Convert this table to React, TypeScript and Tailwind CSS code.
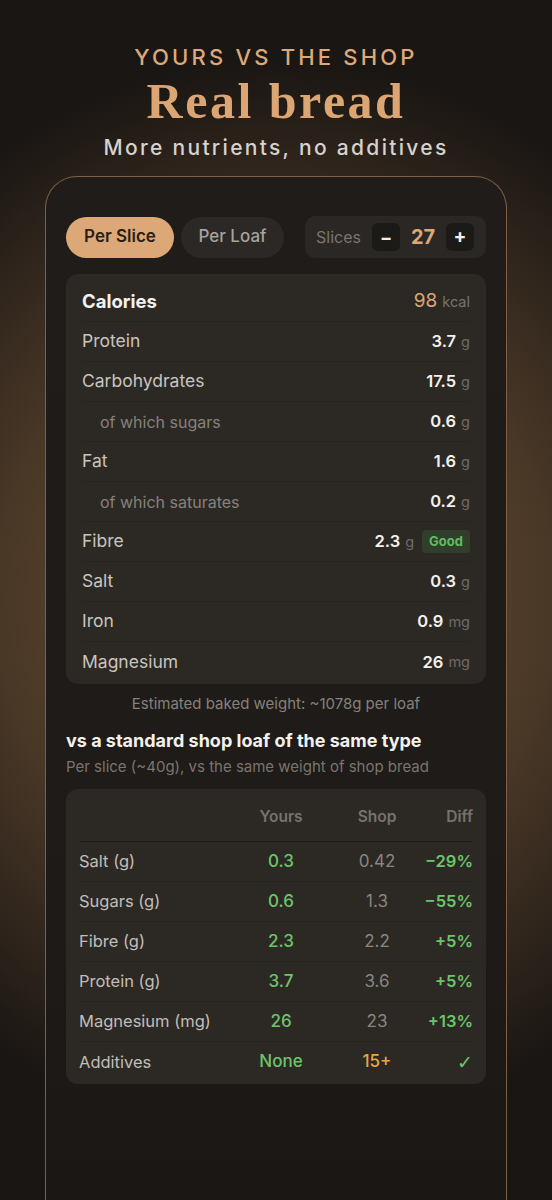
import React from "react";

const nutrients = [
  { label: "Protein", value: "3.7", unit: "g" },
  { label: "Carbohydrates", value: "17.5", unit: "g" },
  { label: "of which sugars", value: "0.6", unit: "g", sub: true },
  { label: "Fat", value: "1.6", unit: "g" },
  { label: "of which saturates", value: "0.2", unit: "g", sub: true },
  { label: "Fibre", value: "2.3", unit: "g", badge: "Good" },
  { label: "Salt", value: "0.3", unit: "g" },
  { label: "Iron", value: "0.9", unit: "mg" },
  { label: "Magnesium", value: "26", unit: "mg" },
];

const compare = [
  { label: "Salt (g)", yours: "0.3", shop: "0.42", diff: "\u221229%" },
  { label: "Sugars (g)", yours: "0.6", shop: "1.3", diff: "\u221255%" },
  { label: "Fibre (g)", yours: "2.3", shop: "2.2", diff: "+5%" },
  { label: "Protein (g)", yours: "3.7", shop: "3.6", diff: "+5%" },
  { label: "Magnesium (mg)", yours: "26", shop: "23", diff: "+13%" },
];

const cols = "grid grid-cols-[136px_132px_60px_66px] items-center";

export default function App() {
  return (
    <div className="relative h-[1200px] w-[552px] overflow-hidden bg-[radial-gradient(ellipse_90%_45%_at_50%_50%,#6a4f35_0%,#4a3827_55%,#1a1613_100%)] font-['Inter',sans-serif]">
      <div className="flex flex-col items-center pt-[44px]">
        <div className="text-[22px] leading-[26px] tracking-[0.145em] text-[#dcaa7a] font-medium">
          YOURS VS THE SHOP
        </div>
        <div className="mt-[5px] font-['Liberation_Serif',serif] text-[50px] font-bold leading-[52px] tracking-[0.05em] text-[#dca674]">
          Real bread
        </div>
        <div className="mt-[8px] text-[21px] leading-[26px] font-medium tracking-[0.11em] text-[#d6d2cd]">
          More nutrients, no additives
        </div>
      </div>

      <div className="mx-[45px] mt-[15px] h-[1100px] rounded-t-[32px] border border-b-0 border-[#7d6146] bg-[linear-gradient(180deg,#1f1c19_0%,#1e1b18_60%,#191613_100%)] px-[20px] pt-[39px]">
        {/* Toggle row */}
        <div className="flex items-center">
          <div className="flex h-[41px] w-[108px] items-center justify-center rounded-full bg-[#dca878] text-[17px] font-semibold text-[#2a1e14]">
            Per Slice
          </div>
          <div className="ml-[7px] flex h-[41px] w-[103px] items-center justify-center rounded-full bg-[#2b2825] text-[17px] font-medium text-[#a7a29c]">
            Per Loaf
          </div>
          <div className="ml-auto flex h-[42px] w-[181px] items-center rounded-[10px] bg-[#2a2724] pl-[11px] pr-[12px]">
            <span className="text-[16px] text-[#7a756f]">Slices</span>
            <div className="ml-auto flex h-[28px] w-[28px] items-center justify-center rounded-[6px] bg-[#1c1a17] text-[18px] font-bold text-[#f2efea]">
              −
            </div>
            <span className="w-[46px] text-center text-[20px] font-bold text-[#dca878]">27</span>
            <div className="flex h-[28px] w-[28px] items-center justify-center rounded-[6px] bg-[#1c1a17] text-[19px] font-bold text-[#f2efea]">
              +
            </div>
          </div>
        </div>

        {/* Nutrients panel */}
        <div className="mt-[16px] rounded-[12px] bg-[#2c2925] px-[16px] pt-[8px] pb-[2px]">
          <div className="flex h-[40px] items-center justify-between border-b border-[#262320]">
            <span className="text-[18.5px] font-bold text-[#f4f1ec]">Calories</span>
            <span className="flex items-baseline gap-[5px]">
              <span className="text-[19px] text-[#dca878]">98</span>
              <span className="text-[14.5px] text-[#77726c]">kcal</span>
            </span>
          </div>
          {nutrients.map((n, i) => (
            <div
              key={n.label}
              className={
                "flex h-[40px] items-center justify-between " +
                (i < nutrients.length - 1 ? "border-b border-[#262320]" : "")
              }
            >
              <span
                className={
                  n.sub
                    ? "pl-[18px] text-[16px] text-[#86817b]"
                    : "text-[17.5px] text-[#c9c4be]"
                }
              >
                {n.label}
              </span>
              <span className="flex items-center">
                <span className="text-[16.5px] font-semibold text-[#f4f1ec]">{n.value}</span>
                <span className="ml-[5px] text-[14.5px] text-[#6f6a64]">{n.unit}</span>
                {n.badge && (
                  <span className="ml-[8px] rounded-[4px] bg-[#2f3f2b] px-[7px] py-[3px] text-[13px] font-bold leading-[17px] text-[#5fbb5f]">
                    {n.badge}
                  </span>
                )}
              </span>
            </div>
          ))}
        </div>

        <div className="mt-[9px] text-center text-[15px] text-[#86817b]">
          Estimated baked weight: ~1078g per loaf
        </div>

        <div className="mt-[11px] text-[18px] font-bold text-[#f4f1ec]">
          vs a standard shop loaf of the same type
        </div>
        <div className="mt-[2px] text-[15px] text-[#7a756f]">
          Per slice (~40g), vs the same weight of shop bread
        </div>

        {/* Comparison table */}
        <div className="mt-[11px] rounded-[12px] bg-[#2c2925] px-[13px] pt-[4px] pb-[2px]">
          <div className={cols + " h-[49px] border-b border-[#1e1c19] text-[15.5px] font-semibold text-[#77726c]"}>
            <span />
            <span className="text-center">Yours</span>
            <span className="text-center">Shop</span>
            <span className="text-right">Diff</span>
          </div>
          {compare.map((r) => (
            <div key={r.label} className={cols + " h-[40px] border-b border-[#262320]"}>
              <span className="text-[16.5px] text-[#c2bdb7]">{r.label}</span>
              <span className="text-center text-[17px] font-medium text-[#6cc46a]">{r.yours}</span>
              <span className="text-center text-[17px] text-[#8a857f]">{r.shop}</span>
              <span className="text-right text-[16.5px] font-semibold text-[#6cc46a]">{r.diff}</span>
            </div>
          ))}
          <div className={cols + " h-[40px]"}>
            <span className="text-[16.5px] text-[#c2bdb7]">Additives</span>
            <span className="text-center text-[17px] font-medium text-[#6cc46a]">None</span>
            <span className="text-center text-[17px] font-medium text-[#e3a645]">15+</span>
            <span className="text-right font-['DejaVu_Sans',sans-serif] text-[19px] leading-[20px] text-[#6cc46a]">✓</span>
          </div>
        </div>
      </div>
    </div>
  );
}
